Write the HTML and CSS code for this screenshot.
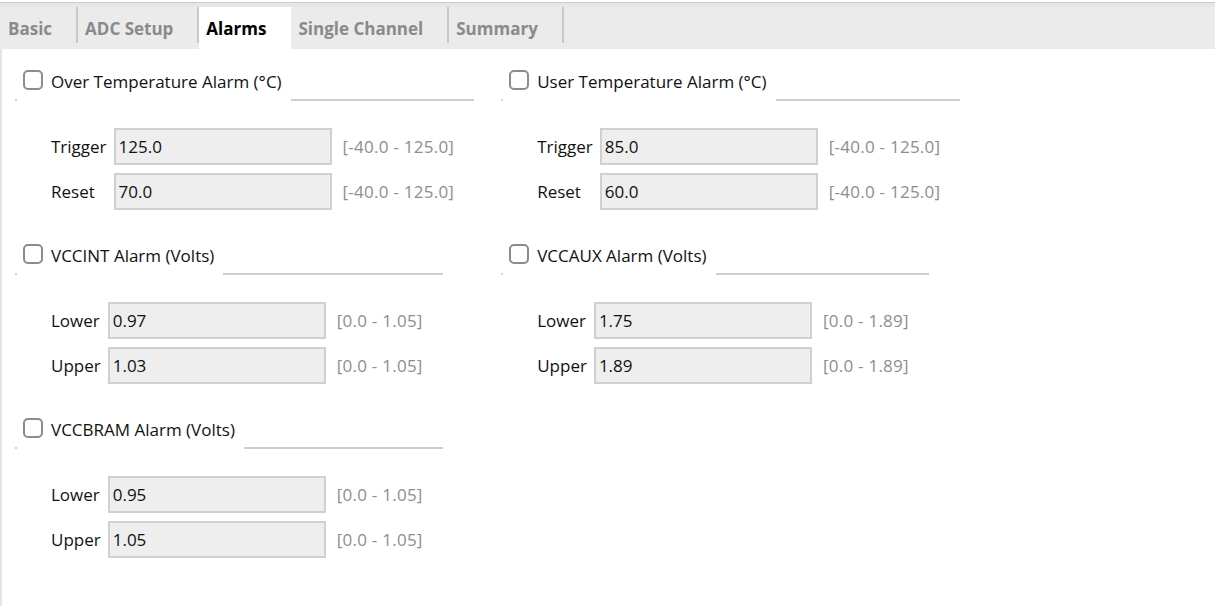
FILE: index.html
```html
<!DOCTYPE html>
<html lang="en">
<head>
<meta charset="utf-8">
<title>Alarms</title>
<link rel="stylesheet" href="styles.css">
</head>
<body>
<div class="window">
  <div class="topline"></div>
  <nav class="tabbar">
    <div class="tab">Basic</div><span class="sep"></span>
    <div class="tab">ADC Setup</div><span class="sep"></span>
    <div class="tab active">Alarms</div>
    <div class="tab">Single Channel</div><span class="sep"></span>
    <div class="tab">Summary</div><span class="sep"></span>
  </nav>
  <main class="content">
    <div class="groups">
      <section class="group">
        <div class="group-head">
          <span class="stub"></span>
          <label class="check"><span class="box"></span><span class="title">Over Temperature Alarm (°C)</span></label>
          <span class="rule"></span>
        </div>
        <div class="fields">
          <span class="lbl">Trigger</span><div class="input">125.0</div><span class="range">[-40.0 - 125.0]</span>
          <span class="lbl">Reset</span><div class="input">70.0</div><span class="range">[-40.0 - 125.0]</span>
        </div>
      </section>
      <section class="group">
        <div class="group-head">
          <span class="stub"></span>
          <label class="check"><span class="box"></span><span class="title">User Temperature Alarm (°C)</span></label>
          <span class="rule"></span>
        </div>
        <div class="fields">
          <span class="lbl">Trigger</span><div class="input">85.0</div><span class="range">[-40.0 - 125.0]</span>
          <span class="lbl">Reset</span><div class="input">60.0</div><span class="range">[-40.0 - 125.0]</span>
        </div>
      </section>
      <section class="group">
        <div class="group-head">
          <span class="stub"></span>
          <label class="check"><span class="box"></span><span class="title">VCCINT Alarm (Volts)</span></label>
          <span class="rule"></span>
        </div>
        <div class="fields">
          <span class="lbl">Lower</span><div class="input">0.97</div><span class="range">[0.0 - 1.05]</span>
          <span class="lbl">Upper</span><div class="input">1.03</div><span class="range">[0.0 - 1.05]</span>
        </div>
      </section>
      <section class="group">
        <div class="group-head">
          <span class="stub"></span>
          <label class="check"><span class="box"></span><span class="title">VCCAUX Alarm (Volts)</span></label>
          <span class="rule"></span>
        </div>
        <div class="fields">
          <span class="lbl">Lower</span><div class="input">1.75</div><span class="range">[0.0 - 1.89]</span>
          <span class="lbl">Upper</span><div class="input">1.89</div><span class="range">[0.0 - 1.89]</span>
        </div>
      </section>
      <section class="group">
        <div class="group-head">
          <span class="stub"></span>
          <label class="check"><span class="box"></span><span class="title">VCCBRAM Alarm (Volts)</span></label>
          <span class="rule"></span>
        </div>
        <div class="fields">
          <span class="lbl">Lower</span><div class="input">0.95</div><span class="range">[0.0 - 1.05]</span>
          <span class="lbl">Upper</span><div class="input">1.05</div><span class="range">[0.0 - 1.05]</span>
        </div>
      </section>
    </div>
  </main>
</div>
</body>
</html>
```
FILE: styles.css
```css
* { box-sizing: border-box; }
html, body { margin: 0; padding: 0; background: #ffffff; }
body {
  font-family: "Open Sans", "Noto Sans", sans-serif;
  font-size: 17px;
  color: #1a1a1a;
}
.window {
  width: 1215px;
  height: 606px;
  display: flex;
  flex-direction: column;
  overflow: hidden;
}
.topline {
  height: 7px;
  border-top: 2px solid #ffffff;
  background: #e6e6e6;
  box-shadow: inset 0 1px 0 #cbcbcb;
}
.tabbar {
  height: 42px;
  background: #ebebeb;
  display: flex;
  align-items: flex-start;
  padding-left: 1px;
}
.tab {
  height: 42px;
  padding: 10px 24px 0 7px;
  line-height: 24px;
  font-weight: 700;
  color: #8a8a8a;
  white-space: nowrap;
}
.tab.active {
  background: #ffffff;
  color: #000000;
  padding-right: 25px;
}
.sep {
  width: 2px;
  height: 36px;
  background: #c9c9c9;
}
.content {
  flex: 1;
  border-left: 2px solid #e4e4e4;
  padding: 21px 0 0 13px;
}
.groups {
  display: grid;
  grid-template-columns: max-content max-content;
  column-gap: 27px;
  row-gap: 34px;
  justify-items: start;
  align-items: start;
}
.group {
  display: flex;
  flex-direction: column;
}
.group-head {
  display: flex;
  align-items: flex-start;
  height: 31px;
}
.stub {
  width: 2px;
  height: 2px;
  align-self: flex-end;
  background: #d2d2d2;
}
.check {
  display: flex;
  align-items: flex-start;
  gap: 8px;
  margin-left: 6px;
}
.box {
  width: 20px;
  height: 20px;
  border: 2px solid #8c8c8c;
  border-radius: 5px;
  background: #ffffff;
  flex: none;
}
.title {
  line-height: 24px;
  white-space: nowrap;
  color: #111111;
}
.rule {
  flex: 1;
  height: 2px;
  align-self: flex-end;
  margin-left: 9px;
  background: #cdcdcd;
}
.fields {
  display: grid;
  grid-template-columns: max-content 218px max-content;
  column-gap: 7px;
  row-gap: 8px;
  align-items: center;
  padding: 27px 20px 0 36px;
}
.lbl {
  white-space: nowrap;
  color: #111111;
}
.input {
  height: 37px;
  border: 2px solid #d0d0d0;
  background: #eeeeee;
  padding-left: 3px;
  display: flex;
  align-items: center;
  color: #111111;
}
.range {
  margin-left: 4px;
  color: #8e8e8e;
  letter-spacing: 0.25px;
  white-space: nowrap;
}
```
